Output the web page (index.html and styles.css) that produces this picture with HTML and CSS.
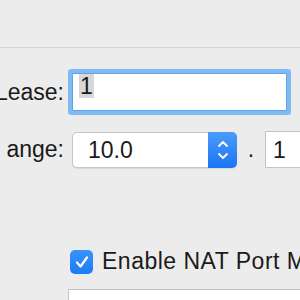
FILE: index.html
```html
<html lang="en">
<head>
  <meta charset="UTF-8">
  <title>Network Settings</title>
  <link rel="stylesheet" href="styles.css">
</head>
<body>
  <div class="toolbar"></div>
  <div class="form">
    <div class="row lease-row">
      <label class="label">Lease:</label>
      <div class="field focused"><span class="sel">1</span></div>
    </div>
    <div class="row range-row">
      <label class="label">ange:</label>
      <div class="popup">
        <span class="popup-text">10.0</span>
        <span class="popup-arrows">
          <svg width="12" height="22" viewBox="0 0 12 22">
            <path d="M2 7 L6 3 L10 7" fill="none" stroke="#fff" stroke-width="1.8" stroke-linecap="round" stroke-linejoin="round"/>
            <path d="M2 15 L6 19 L10 15" fill="none" stroke="#fff" stroke-width="1.8" stroke-linecap="round" stroke-linejoin="round"/>
          </svg>
        </span>
      </div>
      <span class="dot">.</span>
      <div class="field small">1</div>
    </div>
    <div class="row check-row">
      <span class="checkbox">
        <svg width="16" height="16" viewBox="0 0 16 16">
          <path d="M3 8.5 L6.5 12.5 L13 3.5" fill="none" stroke="#fff" stroke-width="2.2" stroke-linecap="round" stroke-linejoin="round"/>
        </svg>
      </span>
      <span class="check-text">Enable NAT Port Mapping Protocol</span>
    </div>
    <div class="row last-row">
      <label class="label">lid ld:</label>
      <div class="field wide"></div>
    </div>
  </div>
</body>
</html>
```

FILE: styles.css
```css
body {
  margin: 0;
  background: #ececec;
  font-family: "Liberation Sans", Arial, sans-serif;
  font-size: 23px;
  color: #1a1a1a;
  overflow: hidden;
}

.toolbar {
  height: 47px;
  border-bottom: 1px solid #d4d4d4;
}

.form {
  padding-top: 25px;
}

.row {
  display: flex;
  align-items: center;
  white-space: nowrap;
}

.label {
  width: 64px;
  flex: none;
  display: flex;
  justify-content: flex-end;
  overflow: visible;
}

.field {
  background: #fff;
  border: 1px solid #c3c3c3;
  box-sizing: border-box;
  height: 38px;
  line-height: 36px;
  padding-left: 6px;
  flex: none;
}

.lease-row .field {
  margin-left: 8px;
  width: 215px;
}

.field.focused {
  border-color: #5ea3ea;
  box-shadow: 0 0 0 4px #7fbaf3;
  border-radius: 1px;
}

.sel {
  background: #d8d8d8;
  padding: 1px 1px;
  display: inline-block;
  line-height: 22px;
  vertical-align: -1px;
}

.range-row {
  margin-top: 20px;
}

.popup {
  margin-left: 8px;
  width: 165px;
  height: 36px;
  display: flex;
  background: #fff;
  border: 1px solid #c4c4c4;
  border-radius: 5px;
  box-sizing: border-box;
  box-shadow: 0 1px 1px rgba(0, 0, 0, 0.08);
  flex: none;
}

.popup-text {
  flex: 1;
  padding-left: 15px;
  line-height: 34px;
}

.popup-arrows {
  width: 29px;
  margin: -1px -1px -1px 0;
  background: linear-gradient(#4a9cfc, #1b74f2);
  border-radius: 0 5px 5px 0;
  display: flex;
  align-items: center;
  justify-content: center;
}

.dot {
  width: 28px;
  text-align: center;
  flex: none;
}

.field.small {
  width: 60px;
  height: 37px;
  padding-left: 7px;
}

.check-row {
  margin-top: 80px;
  padding-left: 70px;
}

.checkbox {
  width: 23px;
  height: 24px;
  border-radius: 5px;
  background: linear-gradient(#3a92fc, #1a7cf7);
  display: flex;
  align-items: center;
  justify-content: center;
  flex: none;
}

.check-text {
  margin-left: 9px;
  letter-spacing: 0.5px;
}

.last-row {
  margin-top: 14px;
  align-items: flex-start;
}

.last-row .label {
  padding-top: 14px;
}

.field.wide {
  margin-left: 4px;
  width: 260px;
}
```
